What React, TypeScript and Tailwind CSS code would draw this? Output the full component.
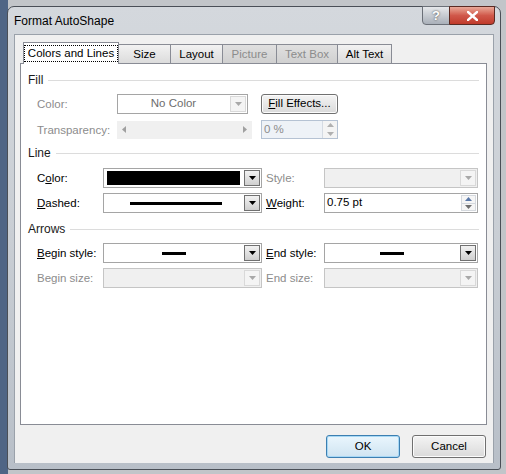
import React from "react";

const font = { fontFamily: '"Liberation Sans", Arial, sans-serif' };

function Tri({ up, color }: { up?: boolean; color: string }) {
  return (
    <svg width="7" height="4" viewBox="0 0 7 4">
      <polygon points={up ? "0,4 7,4 3.5,0" : "0,0 7,0 3.5,4"} fill={color} />
    </svg>
  );
}

function Arrow({ disabled }: { disabled?: boolean }) {
  if (disabled) {
    return (
      <div className="m-px flex w-[16px] items-center justify-center border border-[#d9d9d9] bg-[#f4f4f4]">
        <Tri color="#a8a8a8" />
      </div>
    );
  }
  return (
    <div className="m-px flex w-[16px] items-center justify-center border border-[#707070] bg-gradient-to-b from-[#f2f2f2] to-[#cfcfcf]">
      <Tri color="#000" />
    </div>
  );
}

function Combo({
  className,
  disabled,
  arrowDisabled,
  children,
}: {
  className: string;
  disabled?: boolean;
  arrowDisabled?: boolean;
  children?: React.ReactNode;
}) {
  return (
    <div
      className={`flex h-[20px] items-stretch border ${
        disabled ? "border-[#c5c5c5] bg-[#f0f0f0]" : "border-[#a5a5a5] bg-white"
      } ${className}`}
    >
      <div className="flex flex-1 items-center justify-center overflow-hidden">{children}</div>
      <Arrow disabled={disabled || arrowDisabled} />
    </div>
  );
}

function Header({ text }: { text: string }) {
  return (
    <div className="flex h-[16px] items-center gap-[5px] pl-[7px] pr-[7px]">
      <span className="text-[12px] leading-[16px] text-[#1a1a1a]">{text}</span>
      <div className="h-px flex-1 bg-[#dcdcdc]" />
    </div>
  );
}

function Label({ w, disabled, children }: { w: string; disabled?: boolean; children: React.ReactNode }) {
  return (
    <div
      className={`${w} shrink-0 whitespace-nowrap text-[11.5px] leading-[16px] ${
        disabled ? "text-[#8c8c8c]" : "text-black"
      }`}
    >
      {children}
    </div>
  );
}

function Tab({
  w,
  label,
  selected,
  disabled,
}: {
  w: string;
  label: string;
  selected?: boolean;
  disabled?: boolean;
}) {
  if (selected) {
    return (
      <div
        className={`${w} relative z-10 -mb-px flex h-[22px] items-center justify-center border border-b-0 border-[#898c95] bg-white`}
      >
        <span className="whitespace-nowrap border border-dotted border-black px-[3px] text-[11.5px] leading-[15px] text-black">
          {label}
        </span>
      </div>
    );
  }
  return (
    <div
      className={`${w} -ml-px flex h-[19px] items-center justify-center whitespace-nowrap border border-b-0 border-[#898c95] bg-gradient-to-b ${
        disabled ? "from-[#e0e0e0] to-[#d0d0d0] text-[#8c8c8c]" : "from-[#f2f2f2] to-[#dcdcdc] text-black"
      } text-[11.5px] leading-[16px]`}
    >
      {label}
    </div>
  );
}

function Btn({
  w,
  h = "h-[23px]",
  def,
  children,
}: {
  w: string;
  h?: string;
  def?: boolean;
  children: React.ReactNode;
}) {
  return (
    <div
      className={`${w} ${h} flex items-center justify-center whitespace-nowrap rounded-[3px] border text-[11.5px] text-black ${
        def
          ? "border-[#3c7fb1] bg-gradient-to-b from-[#eaf6fd] to-[#cfe4f1] shadow-[inset_0_0_0_1px_#a7d8f5]"
          : "border-[#707070] bg-gradient-to-b from-[#f4f4f4] to-[#dadada] shadow-[inset_0_0_0_1px_#fcfcfc]"
      }`}
    >
      {children}
    </div>
  );
}

export default function App() {
  return (
    <div
      className="h-[474px] w-[506px] overflow-hidden bg-[linear-gradient(to_right,#4f6585_0px,#4f6585_8px,#c2c5c9_8px)] pt-[6px] pl-[7px]"
      style={font}
    >
      <div className="relative flex h-[464px] w-[494px] flex-col rounded-t-[7px] rounded-b-[3px] border border-[#4a4f57] bg-gradient-to-b from-[#d4d8dd] via-[#c9ced4] to-[#b8bfc8]">
        {/* title bar */}
        <div className="flex h-[27px] items-start justify-between">
          <div className="pl-[6px] pt-[6px] text-[12px] leading-[16px] text-black">Format AutoShape</div>
          <div className="-mt-px mr-[5px] flex">
            <div className="flex h-[19px] w-[28px] items-center justify-center rounded-bl-[4px] border border-[#6b7078] bg-gradient-to-b from-[#e6e8eb] to-[#a9b0b9] text-[13px] font-bold text-white [text-shadow:0_0_2px_#333]">
              ?
            </div>
            <div className="-ml-px flex h-[19px] w-[46px] items-center justify-center rounded-br-[4px] border border-[#5a2a22] bg-gradient-to-b from-[#e8a898] via-[#d0584a] to-[#c03a2a]">
              <svg width="11" height="10" viewBox="0 0 11 10">
                <path d="M1 1 L10 9 M10 1 L1 9" stroke="#fff" strokeWidth="2.4" strokeLinecap="square" />
              </svg>
            </div>
          </div>
        </div>

        {/* client */}
        <div className="mx-[6px] flex h-[429px] flex-col border-x border-t border-[#9aa1aa] bg-[#f0f0f0]">
          <div className="mt-[6px] flex h-[22px] items-end pl-[8px]">
            <Tab w="w-[96px]" label="Colors and Lines" selected />
            <Tab w="w-[53px]" label="Size" />
            <Tab w="w-[53px]" label="Layout" />
            <Tab w="w-[55px]" label="Picture" disabled />
            <Tab w="w-[62px]" label="Text Box" disabled />
            <Tab w="w-[55px]" label="Alt Text" />
          </div>

          <div className="ml-[5px] h-[362px] w-[467px] border border-[#898c95] bg-white">
            <div className="mt-[8px]">
              <Header text="Fill" />
            </div>

            {/* Fill Color */}
            <div className="mt-[6px] flex items-center pl-[16px]">
              <Label w="w-[80px]" disabled>
                Color:
              </Label>
              <Combo className="w-[131px]" arrowDisabled>
                <span className="text-[11.5px] text-[#6d6d6d]">No Color</span>
              </Combo>
              <div className="ml-[13px]">
                <Btn w="w-[77px]" h="h-[20px]">
                  <span>
                    <span className="underline">F</span>ill Effects...
                  </span>
                </Btn>
              </div>
            </div>

            {/* Transparency */}
            <div className="mt-[6px] flex items-center pl-[16px]">
              <Label w="w-[80px]" disabled>
                Transparency:
              </Label>
              <div className="flex h-[18px] w-[135px] items-center justify-between bg-[#f0f0f0] px-[5px]">
                <svg width="4" height="7" viewBox="0 0 4 7">
                  <polygon points="4,0 4,7 0,3.5" fill="#a0a0a0" />
                </svg>
                <svg width="4" height="7" viewBox="0 0 4 7">
                  <polygon points="0,0 0,7 4,3.5" fill="#a0a0a0" />
                </svg>
              </div>
              <div className="ml-[9px] flex h-[19px] w-[77px] items-stretch border border-[#b5c2d3] bg-[#eef2f7]">
                <div className="flex flex-1 items-center pl-[2px] text-[11.5px] text-[#8c8c8c]">0 %</div>
                <div className="flex w-[15px] flex-col border-l border-[#d5dbe3] bg-[#f4f4f4]">
                  <div className="flex flex-1 items-center justify-center">
                    <Tri up color="#b0b0b0" />
                  </div>
                  <div className="flex flex-1 items-center justify-center">
                    <Tri color="#b0b0b0" />
                  </div>
                </div>
              </div>
            </div>

            <div className="mt-[6px]">
              <Header text="Line" />
            </div>

            {/* Line Color / Style */}
            <div className="mt-[7px] flex items-center pl-[16px]">
              <Label w="w-[66px]">
                C<span className="underline">o</span>lor:
              </Label>
              <Combo className="w-[159px]">
                <div className="mx-[3px] h-[14px] w-full bg-black" />
              </Combo>
              <div className="ml-[4px]">
                <Label w="w-[58px]" disabled>
                  Style:
                </Label>
              </div>
              <Combo className="w-[154px]" disabled />
            </div>

            {/* Dashed / Weight */}
            <div className="mt-[5px] flex items-center pl-[16px]">
              <Label w="w-[66px]">
                <span className="underline">D</span>ashed:
              </Label>
              <Combo className="w-[159px]">
                <div className="ml-[4px] h-[3px] w-[92px] bg-black" />
              </Combo>
              <div className="ml-[4px]">
                <Label w="w-[58px]">
                  <span className="underline">W</span>eight:
                </Label>
              </div>
              <div className="flex h-[20px] w-[154px] items-stretch border border-[#a5a5a5] bg-white">
                <div className="flex flex-1 items-center pl-[2px] text-[11.5px] text-black">0.75 pt</div>
                <div className="m-px flex w-[15px] flex-col border border-[#d5d9de] bg-[#f6f6f6]">
                  <div className="flex flex-1 items-center justify-center border-b border-[#d5d9de]">
                    <Tri up color="#5a78a8" />
                  </div>
                  <div className="flex flex-1 items-center justify-center">
                    <Tri color="#707070" />
                  </div>
                </div>
              </div>
            </div>

            <div className="mt-[8px]">
              <Header text="Arrows" />
            </div>

            {/* Begin / End style */}
            <div className="mt-[6px] flex items-center pl-[16px]">
              <Label w="w-[66px]">
                <span className="underline">B</span>egin style:
              </Label>
              <Combo className="w-[159px]">
                <div className="h-[3px] w-[24px] bg-black" />
              </Combo>
              <div className="ml-[4px]">
                <Label w="w-[58px]">
                  <span className="underline">E</span>nd style:
                </Label>
              </div>
              <Combo className="w-[154px]">
                <div className="h-[3px] w-[24px] bg-black" />
              </Combo>
            </div>

            {/* Begin / End size */}
            <div className="mt-[5px] flex items-center pl-[16px]">
              <Label w="w-[66px]" disabled>
                Begin size:
              </Label>
              <Combo className="w-[159px]" disabled />
              <div className="ml-[4px]">
                <Label w="w-[58px]" disabled>
                  End size:
                </Label>
              </div>
              <Combo className="w-[154px]" disabled />
            </div>
          </div>

          <div className="mt-[10px] flex justify-end gap-[12px] pr-[7px]">
            <Btn w="w-[74px]" def>
              OK
            </Btn>
            <Btn w="w-[74px]">Cancel</Btn>
          </div>
        </div>
      </div>
    </div>
  );
}
